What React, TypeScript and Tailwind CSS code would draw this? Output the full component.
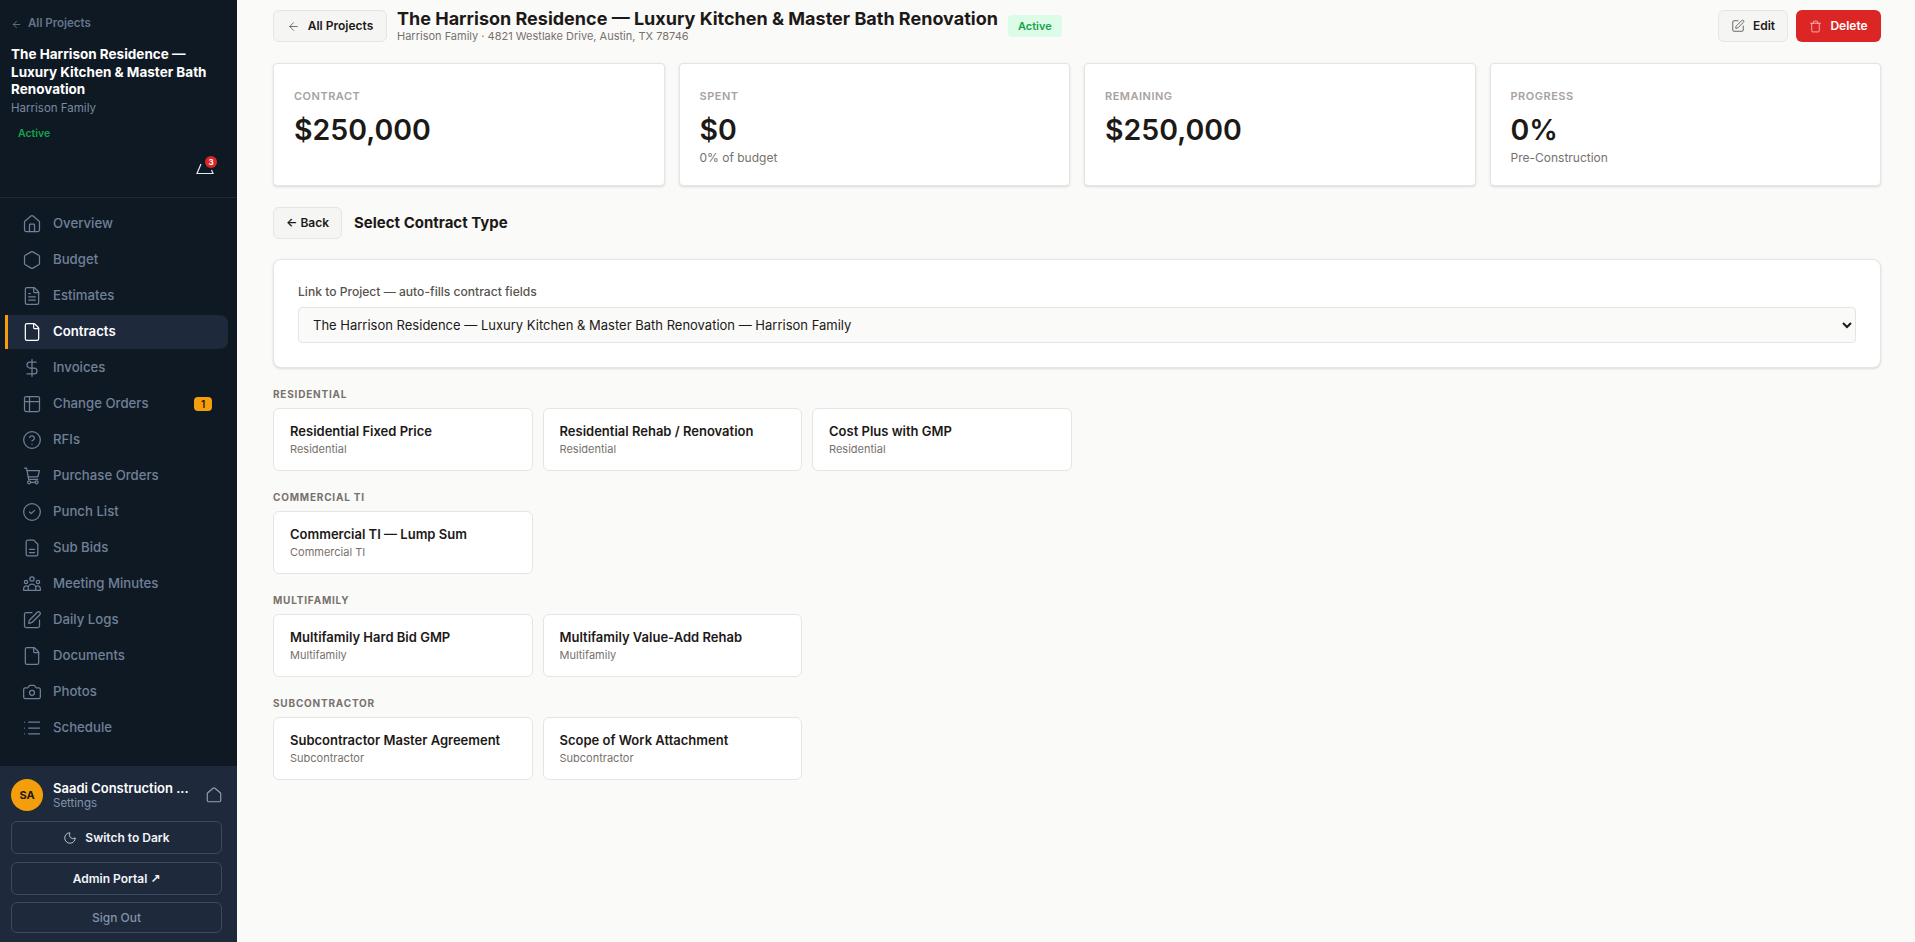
import { ArrowLeft, Camera, CircleCheck, CircleHelp, DollarSign, File, FileText, Hexagon, House, List, Moon, SquarePen, Table2, Trash } from 'lucide-react'

const font = { fontFamily: 'Inter, "Noto Sans", sans-serif' }

function SubBidsIcon({ size = 20, strokeWidth = 1.5 }: { size?: number; strokeWidth?: number }) {
  return (
    <svg width={size} height={size} viewBox="0 0 24 24" fill="none" stroke="currentColor" strokeWidth={strokeWidth} strokeLinecap="round" strokeLinejoin="round">
      <path d="M14 2.5H7a2 2 0 0 0-2 2v15a2 2 0 0 0 2 2h10a2 2 0 0 0 2-2V7.5z" />
      <path d="M9 13.5h6M9 17.5h6" />
    </svg>
  )
}

function PeopleIcon({ size = 20, strokeWidth = 1.5 }: { size?: number; strokeWidth?: number }) {
  return (
    <svg width={size} height={size} viewBox="0 0 24 24" fill="none" stroke="currentColor" strokeWidth={strokeWidth} strokeLinecap="round" strokeLinejoin="round">
      <circle cx="12" cy="6" r="2.6" />
      <circle cx="4.8" cy="9.5" r="2" />
      <circle cx="19.2" cy="9.5" r="2" />
      <path d="M7.5 19.5v-3a4.5 4.5 0 0 1 9 0v3z" />
      <path d="M7.5 19.5H2v-2.2a3 3 0 0 1 4.6-2.5M16.5 19.5H22v-2.2a3 3 0 0 0-4.6-2.5" />
    </svg>
  )
}

function CartIcon({ size = 20, strokeWidth = 1.5 }: { size?: number; strokeWidth?: number }) {
  return (
    <svg width={size} height={size} viewBox="0 0 24 24" fill="none" stroke="currentColor" strokeWidth={strokeWidth} strokeLinecap="round" strokeLinejoin="round">
      <path d="M3 2.5h2.5L8 16h11" />
      <path d="M6 5.5h15l-2 7.5H7.5" />
      <circle cx="8.5" cy="19.5" r="1.8" />
      <circle cx="17.5" cy="19.5" r="1.8" />
      <path d="M10.3 19.5h5.4" />
    </svg>
  )
}

const navItems = [
  { label: 'Overview', icon: House },
  { label: 'Budget', icon: Hexagon },
  { label: 'Estimates', icon: FileText },
  { label: 'Contracts', icon: File, active: true },
  { label: 'Invoices', icon: DollarSign },
  { label: 'Change Orders', icon: Table2, badge: '1' },
  { label: 'RFIs', icon: CircleHelp },
  { label: 'Purchase Orders', icon: CartIcon },
  { label: 'Punch List', icon: CircleCheck },
  { label: 'Sub Bids', icon: SubBidsIcon },
  { label: 'Meeting Minutes', icon: PeopleIcon },
  { label: 'Daily Logs', icon: SquarePen },
  { label: 'Documents', icon: File },
  { label: 'Photos', icon: Camera },
  { label: 'Schedule', icon: List },
]

const stats = [
  { label: 'CONTRACT', value: '$250,000' },
  { label: 'SPENT', value: '$0', sub: '0% of budget' },
  { label: 'REMAINING', value: '$250,000' },
  { label: 'PROGRESS', value: '0%', sub: 'Pre-Construction' },
]

const sections = [
  { title: 'RESIDENTIAL', cards: ['Residential Fixed Price', 'Residential Rehab / Renovation', 'Cost Plus with GMP'], sub: 'Residential' },
  { title: 'COMMERCIAL TI', cards: ['Commercial TI — Lump Sum'], sub: 'Commercial TI' },
  { title: 'MULTIFAMILY', cards: ['Multifamily Hard Bid GMP', 'Multifamily Value-Add Rehab'], sub: 'Multifamily' },
  { title: 'SUBCONTRACTOR', cards: ['Subcontractor Master Agreement', 'Scope of Work Attachment'], sub: 'Subcontractor' },
]

function Sidebar() {
  return (
    <aside className="flex h-[942px] w-[237px] shrink-0 flex-col bg-[#0f1923]">
      <div className="h-[198px] shrink-0 border-b border-[#1e293b] px-[11px] pt-[16px]">
        <div className="flex h-4 items-center gap-[6px] text-[11.5px] font-semibold text-[#64748b]">
          <ArrowLeft size={11} />
          All Projects
        </div>
        <div className="mt-[14px] text-[13.5px] font-bold leading-[17.5px] text-white">
          The Harrison Residence — Luxury Kitchen &amp; Master Bath Renovation
        </div>
        <div className="text-[11.5px] leading-[18px] text-[#7a8aa0]">Harrison Family</div>
        <div className="mt-[9px] pl-[7px] text-[10.5px] font-semibold leading-4 text-[#16a34a]">Active</div>
        <div className="mt-[15px] flex justify-end pr-[10px]">
          <div className="relative h-[18px] w-5">
            <svg width="18" height="16" viewBox="0 0 18 16" fill="none" stroke="#e2e8f0" strokeWidth={1.2} className="absolute left-0 top-[2px]">
              <path d="M5 5 1 14.5h16L15.5 11" />
              <path d="M8.8 14.5h.4" />
            </svg>
            <span className="absolute right-[-1px] top-[-1px] flex h-3 w-3 items-center justify-center rounded-full bg-[#dc2626] text-[8px] font-bold text-white">3</span>
          </div>
        </div>
      </div>
      <nav className="flex flex-1 flex-col gap-[2px] pt-[9px]">
        {navItems.map((item) => {
          const Icon = item.icon
          return (
            <div
              key={item.label}
              className={
                item.active
                  ? 'ml-[5px] mr-[9px] flex h-[34px] items-center gap-[11px] rounded-r-lg border-l-[3px] border-[#f59e0b] bg-[#1e293b] pl-[14px] pr-4 text-[13.2px] font-semibold text-white'
                  : 'ml-[5px] mr-[9px] flex h-[34px] items-center gap-[11px] border-l-[3px] border-transparent pl-[14px] pr-4 text-[13.2px] font-medium text-[#6f8098]'
              }
            >
              <Icon size={20} strokeWidth={1.5} />
              <span className="flex-1">{item.label}</span>
              {item.badge && (
                <span className="flex h-[14px] w-[18px] items-center justify-center rounded bg-[#f59e0b] text-[10px] font-semibold text-[#1c1917]">{item.badge}</span>
              )}
            </div>
          )
        })}
      </nav>
      <div className="h-[176px] shrink-0 bg-[#1e293b] pl-[11px] pr-[15px] pt-[13px]">
        <div className="flex h-8 items-center">
          <div className="flex h-8 w-8 shrink-0 items-center justify-center rounded-full bg-[#f59e0b] text-[11px] font-bold text-[#1c1917]">SA</div>
          <div className="ml-[10px] min-w-0 flex-1">
            <div className="truncate text-[13px] font-semibold leading-4 text-white">Saadi Construction ...</div>
            <div className="text-[11.5px] leading-[14px] text-[#8293a9]">Settings</div>
          </div>
          <svg width="18" height="18" viewBox="0 0 24 24" fill="none" stroke="#94a3b8" strokeWidth={1.5} strokeLinejoin="round" className="ml-2 mr-[-1px] shrink-0">
            <path d="M3 10.5a2 2 0 0 1 .7-1.5l7-6a2 2 0 0 1 2.6 0l7 6a2 2 0 0 1 .7 1.5V19a2 2 0 0 1-2 2H5a2 2 0 0 1-2-2z" />
          </svg>
        </div>
        <div className="mt-[10px] flex h-[33px] items-center justify-center gap-2 rounded-md border border-[#3b4a5f] text-[12px] font-semibold text-[#f1f5f9]">
          <Moon size={14} strokeWidth={1.5} className="text-[#cbd5e1]" />
          Switch to Dark
        </div>
        <div className="mt-2 flex h-[33px] items-center justify-center gap-[3px] rounded-md border border-[#3b4a5f] text-[12px] font-semibold text-[#f1f5f9]">
          Admin Portal
          <span style={{ fontFamily: '"DejaVu Sans", sans-serif' }}>↗</span>
        </div>
        <div className="mt-[7px] flex h-[31px] items-center justify-center rounded-md border border-[#3b4a5f] text-[12px] font-medium text-[#8293a9]">Sign Out</div>
      </div>
    </aside>
  )
}

export default function App() {
  return (
    <div className="flex h-[942px] overflow-hidden bg-[#fafaf9] text-[#1c1917]" style={font}>
      <Sidebar />
      <main className="min-w-0 flex-1 pl-[36px] pr-[34px] pt-[10px]">
        <div className="flex h-[32px] items-center gap-[10px]">
          <div className="flex h-[32px] w-[114px] items-center justify-center gap-[8px] rounded-md border border-[#e7e5e4] bg-[#f5f5f4] text-[12px] font-semibold">
            <ArrowLeft size={13} strokeWidth={1.5} className="text-[#57534e]" />
            All Projects
          </div>
          <div className="min-w-0 pt-[1px]">
            <div className="text-[18px] font-bold leading-[20px]">The Harrison Residence — Luxury Kitchen &amp; Master Bath Renovation</div>
            <div className="text-[11px] leading-[15px] text-[#78716c]">Harrison Family · 4821 Westlake Drive, Austin, TX 78746</div>
          </div>
          <div className="flex h-[22px] w-[54px] items-center justify-center rounded bg-[#dcfce7] text-[11px] font-semibold text-[#16a34a]">Active</div>
          <div className="ml-auto flex items-center gap-2">
            <div className="flex h-[32px] w-[70px] items-center justify-center gap-2 rounded-md border border-[#e7e5e4] bg-[#f5f5f4] text-[12px] font-semibold">
              <SquarePen size={14} strokeWidth={1.5} className="text-[#57534e]" />
              Edit
            </div>
            <div className="flex h-[32px] w-[85px] items-center justify-center gap-2 rounded-md bg-[#dc2626] text-[12px] font-semibold text-white">
              <Trash size={13} strokeWidth={1.5} className="text-[#fecaca]" />
              Delete
            </div>
          </div>
        </div>

        <div className="mt-[21px] grid grid-cols-4 gap-[14px]">
          {stats.map((s) => (
            <div key={s.label} className="h-[123px] rounded border border-[#e7e5e4] bg-white px-5 pt-[24px] shadow-sm">
              <div className="text-[11px] font-semibold leading-4 tracking-[0.5px] text-[#a8a29e]">{s.label}</div>
              <div className="mt-[8px] text-[28.5px] font-semibold leading-[36px]">{s.value}</div>
              {s.sub && <div className="mt-[2px] text-[12px] leading-4 text-[#78716c]">{s.sub}</div>}
            </div>
          ))}
        </div>

        <div className="mt-[21px] flex h-[32px] items-center gap-3">
          <div className="flex h-[32px] w-[69px] items-center justify-center rounded-md border border-[#e7e5e4] bg-[#f5f5f4] text-[12px] font-semibold">← Back</div>
          <h2 className="text-[15px] font-bold">Select Contract Type</h2>
        </div>

        <div className="mt-[20px] h-[109px] rounded-lg border border-[#e7e5e4] bg-white px-6 pt-[24px] shadow-sm">
          <label className="block text-[12.1px] font-medium leading-4 text-[#57534e]">Link to Project — auto-fills contract fields</label>
          <select className="mt-[7px] block h-[36px] w-full rounded border border-[#e7e5e4] bg-[#fafaf9] px-[10px] text-[13px]" defaultValue="a" style={font}>
            <option value="a">The Harrison Residence — Luxury Kitchen &amp; Master Bath Renovation — Harrison Family</option>
          </select>
        </div>

        <div className="mt-[19px] flex flex-col gap-[19px]">
          {sections.map((sec) => (
            <section key={sec.title}>
              <div className="text-[10px] font-bold leading-[14px] tracking-[0.8px] text-[#78716c]">{sec.title}</div>
              <div className="mt-[7px] flex gap-[10px]">
                {sec.cards.map((c) => (
                  <div key={c} className="h-[63px] w-[259.5px] rounded-md border border-[#e7e5e4] bg-white px-4 pt-[13px]">
                    <div className="text-[13px] font-semibold leading-[18px]">{c}</div>
                    <div className="mt-[1px] text-[11px] leading-4 text-[#78716c]">{sec.sub}</div>
                  </div>
                ))}
              </div>
            </section>
          ))}
        </div>
      </main>
    </div>
  )
}
